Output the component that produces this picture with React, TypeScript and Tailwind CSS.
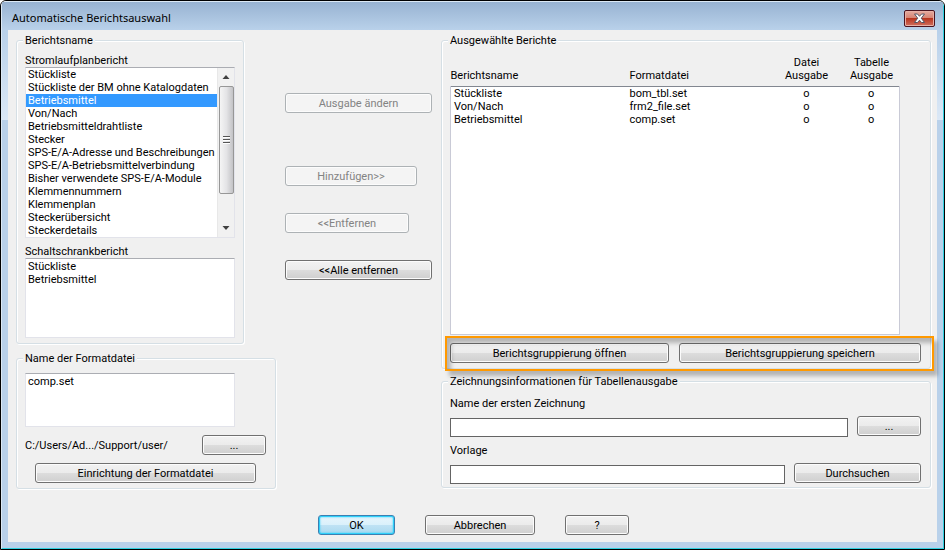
import { clsx } from "clsx";
import type { ButtonHTMLAttributes, ReactNode } from "react";

const schematicReports = [
  "Stückliste",
  "Stückliste der BM ohne Katalogdaten",
  "Betriebsmittel",
  "Von/Nach",
  "Betriebsmitteldrahtliste",
  "Stecker",
  "SPS-E/A-Adresse und Beschreibungen",
  "SPS-E/A-Betriebsmittelverbindung",
  "Bisher verwendete SPS-E/A-Module",
  "Klemmennummern",
  "Klemmenplan",
  "Steckerübersicht",
  "Steckerdetails",
];

const selectedReports = [
  { name: "Stückliste", format: "bom_tbl.set" },
  { name: "Von/Nach", format: "frm2_file.set" },
  { name: "Betriebsmittel", format: "comp.set" },
];

function Button({
  className,
  primary,
  ...props
}: ButtonHTMLAttributes<HTMLButtonElement> & { primary?: boolean }) {
  return (
    <button
      type="button"
      className={clsx(
        "h-5 shrink-0 rounded-[3px] border pt-px text-center leading-[17px]",
        primary
          ? "border-[#3c7fb1] bg-[linear-gradient(#e8f5fc,#d9f0fb_50%,#bfe2f4_50%,#a9d9f0)] shadow-[inset_0_0_0_1px_#2fd0fa,inset_0_0_2px_1px_#2fd0fa]"
          : "border-[#707070] bg-[linear-gradient(#f2f2f2,#ebebeb_50%,#dddddd_50%,#cfcfcf)] shadow-[inset_0_0_0_1px_#fcfcfc] disabled:border-[#adb2b5] disabled:bg-[#f4f4f4] disabled:bg-none disabled:text-[#838383]",
        className,
      )}
      {...props}
    />
  );
}

function Group({
  title,
  className,
  children,
}: {
  title: string;
  className?: string;
  children: ReactNode;
}) {
  return (
    <fieldset
      className={clsx(
        "min-w-0 rounded-[3px] border border-[#d5dfe5] px-2 shadow-[1px_1px_0_#fff,inset_1px_1px_0_#fff]",
        className,
      )}
    >
      <legend className="-ml-0.5 bg-[#f0f0f0] px-0.5">{title}</legend>
      {children}
    </fieldset>
  );
}

function ListBox({
  labelledBy,
  items,
  selected,
  className,
}: {
  labelledBy: string;
  items: string[];
  selected?: string;
  className?: string;
}) {
  return (
    <ul
      role="listbox"
      aria-labelledby={labelledBy}
      className={clsx("min-w-0 flex-1 bg-white", className)}
    >
      {items.map((item) => (
        <li
          key={item}
          role="option"
          aria-selected={item === selected}
          className="px-0.5 whitespace-nowrap aria-selected:bg-[#3399ff] aria-selected:text-white"
        >
          {item}
        </li>
      ))}
    </ul>
  );
}

const listFrame =
  "flex w-[210px] border border-[#e2e3ea] border-t-[#abadb3]";

function ScrollBar() {
  return (
    <div
      aria-hidden="true"
      className="flex w-[17px] flex-col items-center border-l border-[#e8e8e8] bg-[#f1f1f1]"
    >
      <svg viewBox="0 0 16 18" className="h-[18px] w-4">
        <path d="M8 7 L11.5 11 H4.5 Z" fill="#404040" />
      </svg>
      <div className="flex h-[108px] w-[15px] flex-col items-center justify-center gap-px rounded-[2px] border border-[#979797] bg-linear-to-r from-[#f5f5f5] via-[#e4e4e6] to-[#c3c3c6]">
        <span className="h-0.5 w-[7px] border-t border-[#555] bg-white" />
        <span className="h-0.5 w-[7px] border-t border-[#555] bg-white" />
        <span className="h-0.5 w-[7px] border-t border-[#555] bg-white" />
      </div>
      <svg viewBox="0 0 16 18" className="mt-auto h-[18px] w-4">
        <path d="M4.5 7 H11.5 L8 11 Z" fill="#404040" />
      </svg>
    </div>
  );
}

function TitleBar() {
  return (
    <header className="flex h-[28px] items-start justify-between bg-linear-to-b from-[#98b3d2] to-[#b9d1ea] pr-2 pl-2.5">
      <h1 className="pt-2 font-['Noto_Sans',sans-serif] text-[11px] leading-4">
        Automatische Berichtsauswahl
      </h1>
      <button
        type="button"
        aria-label="Schließen"
        className="mt-2 flex h-[17px] w-[31px] items-center justify-center rounded-[2px] border border-[#4a1420] bg-[linear-gradient(#e5aba0,#d5806f_50%,#b8351f_50%,#d0705f)] shadow-[inset_0_0_0_1px_#e8b0a6]"
      >
        <svg viewBox="0 0 13 11" className="h-[11px] w-[13px]">
          <path
            d="M1.5 1 H4.5 L6.5 3.3 L8.5 1 H11.5 L8.3 5.2 L11.5 9.5 H8.5 L6.5 7.2 L4.5 9.5 H1.5 L4.7 5.2 Z"
            fill="#fff"
            stroke="#535666"
            strokeWidth="1"
          />
        </svg>
      </button>
    </header>
  );
}

function ReportTable() {
  return (
    <table className="h-[281px] w-[calc(100%-22px)] table-fixed border-collapse">
      <thead>
        <tr className="h-8 align-bottom">
          <th className="w-[179px] pb-1 text-left font-normal">Berichtsname</th>
          <th className="pb-1 text-left font-normal">Formatdatei</th>
          <th className="w-[66px] pb-1 font-normal">
            Datei
            <br />
            Ausgabe
          </th>
          <th className="w-[60px] pb-1 pl-1 font-normal">
            Tabelle
            <br />
            Ausgabe
          </th>
        </tr>
      </thead>
      <tbody className="border border-[#c9cad6] border-t-[#828790] bg-white">
        {selectedReports.map((report) => (
          <tr key={report.name} className="h-[13px]">
            <td className="pl-[3px]">{report.name}</td>
            <td>{report.format}</td>
            <td className="text-center">o</td>
            <td className="pl-1 text-center">o</td>
          </tr>
        ))}
        <tr>
          <td colSpan={4} />
        </tr>
      </tbody>
    </table>
  );
}

export default function App() {
  return (
    <div className="flex min-h-screen flex-col overflow-hidden rounded-t-md border border-black font-['Roboto','Liberation_Sans',sans-serif] text-[11px] leading-[13px] text-black">
      <div className="flex flex-1 flex-col rounded-t-[5px] border border-[#dce9f5] border-r-[#2fd0e0] border-b-[#2fd0e0] bg-[linear-gradient(#b9d1ea_30px,#dbe8f6_118px,#b9d1ea_118px)]">
        <TitleBar />
        <main className="mx-1.5 mb-1.5 flex flex-1 flex-col bg-[#f0f0f0] pt-1">
          <div className="flex items-start pr-1.5 pl-2">
            <div className="w-[260px] shrink-0">
              <Group title="Berichtsname" className="w-[228px] pb-[5px]">
                <p id="schematic" className="mt-[7px]">
                  Stromlaufplanbericht
                </p>
                <div className={listFrame}>
                  <ListBox
                    labelledBy="schematic"
                    items={schematicReports}
                    selected="Betriebsmittel"
                  />
                  <ScrollBar />
                </div>
                <p id="panel" className="mt-[7px]">
                  Schaltschrankbericht
                </p>
                <div className={listFrame}>
                  <ListBox
                    labelledBy="panel"
                    items={["Stückliste", "Betriebsmittel"]}
                    className="h-[78px] pt-px"
                  />
                </div>
              </Group>
              <Group title="Name der Formatdatei" className="mt-2 pb-[5px]">
                <div className={clsx(listFrame, "mt-2")}>
                  <textarea
                    aria-label="Name der Formatdatei"
                    className="h-[52px] flex-1 resize-none bg-white px-0.5 pt-px outline-none"
                    defaultValue="comp.set"
                  />
                </div>
                <div className="mt-2 flex items-center justify-between pr-px">
                  <span>C:/Users/Ad.../Support/user/</span>
                  <Button className="w-16">...</Button>
                </div>
                <Button className="mt-2 ml-2.5 w-[221px]">
                  Einrichtung der Formatdatei
                </Button>
              </Group>
            </div>

            <div className="flex w-[165px] shrink-0 flex-col items-start pt-[59px] pl-[9px]">
              <Button disabled className="w-[147px]">
                Ausgabe ändern
              </Button>
              <Button disabled className="mt-[53px] w-[132px]">
                Hinzufügen&gt;&gt;
              </Button>
              <Button disabled className="mt-[27px] w-[124px]">
                &lt;&lt;Entfernen
              </Button>
              <Button className="mt-[27px] w-[147px]">
                &lt;&lt;Alle entfernen
              </Button>
            </div>

            <div className="min-w-0 flex-1">
              <Group title="Ausgewählte Berichte" className="pt-[7px] pb-[5px]">
                <ReportTable />
                <div className="relative mt-2 flex gap-2.5 pr-px">
                  <Button className="w-[219px]">
                    Berichtsgruppierung öffnen
                  </Button>
                  <Button className="flex-1 shrink">
                    Berichtsgruppierung speichern
                  </Button>
                  <span className="pointer-events-none absolute -top-[7px] -right-3 -bottom-2 -left-[5px] border-2 border-[#ff9900] shadow-[4px_5px_4px_rgba(0,0,0,0.25),inset_4px_5px_4px_rgba(0,0,0,0.25)]" />
                </div>
              </Group>
              <Group
                title="Zeichnungsinformationen für Tabellenausgabe"
                className="mt-1.5 pb-[3px]"
              >
                <label htmlFor="drawing" className="mt-[9px] block">
                  Name der ersten Zeichnung
                </label>
                <div className="mt-1.5 flex items-start gap-[9px] pr-px">
                  <input
                    id="drawing"
                    className="mt-0.5 h-[19px] min-w-0 flex-1 border border-[#646464] bg-white px-1"
                  />
                  <Button className="w-16">...</Button>
                </div>
                <label htmlFor="template" className="mt-[7px] block">
                  Vorlage
                </label>
                <div className="mt-1.5 flex items-start gap-[9px] pr-px">
                  <input
                    id="template"
                    className="mt-0.5 h-[19px] min-w-0 flex-1 border border-[#646464] bg-white px-1"
                  />
                  <Button className="w-[127px]">Durchsuchen</Button>
                </div>
              </Group>
            </div>
          </div>
          <div className="mt-auto flex justify-center gap-[30px] pb-[7px] pl-0.5">
            <Button primary className="w-[77px]">
              OK
            </Button>
            <Button className="w-[110px]">Abbrechen</Button>
            <Button className="w-16">?</Button>
          </div>
        </main>
      </div>
    </div>
  );
}
